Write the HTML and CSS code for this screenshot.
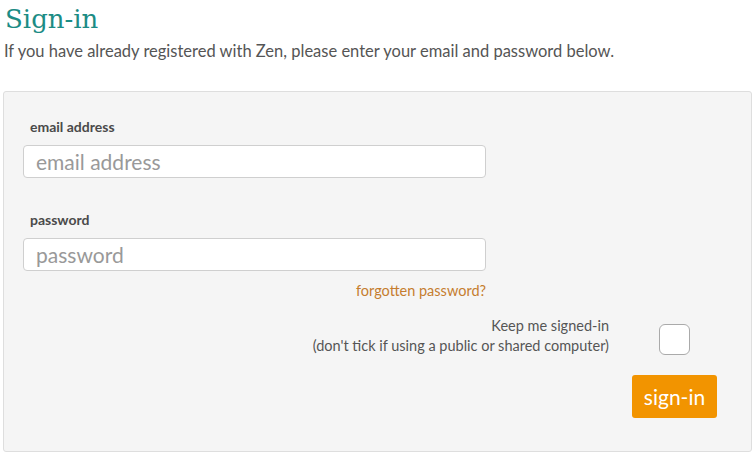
FILE: index.html
```html
<!DOCTYPE html>
<html lang="en">
<head>
<meta charset="utf-8">
<title>Sign-in</title>
<link rel="stylesheet" href="styles.css">
</head>
<body>
<main class="page">
  <h1 class="title">Sign-in</h1>
  <p class="intro">If you have already registered with Zen, please enter your email and password below.</p>
  <form class="panel">
    <div class="field">
      <label class="label" for="email">email address</label>
      <input class="input" id="email" type="text" placeholder="email address">
    </div>
    <div class="field field-pw">
      <label class="label" for="pw">password</label>
      <input class="input" id="pw" type="password" placeholder="password">
      <a class="forgot" href="#">forgotten password?</a>
    </div>
    <div class="keep">
      <div class="keep-text">Keep me signed-in<br>(don't tick if using a public or shared computer)</div>
      <span class="checkbox"></span>
    </div>
    <div class="actions">
      <button class="btn" type="button">sign-in</button>
    </div>
  </form>
</main>
</body>
</html>
```
FILE: styles.css
```css
* { box-sizing: border-box; }
html, body { margin: 0; padding: 0; background: #fff; }
body { font-family: "Lato", "Open Sans", sans-serif; color: #555; }
.page { padding: 0 4px 0 3px; }
.title {
  margin: 0;
  padding: 4px 0 0 2px;
  font-family: "DejaVu Serif", serif;
  font-weight: normal;
  font-size: 26px;
  line-height: 30px;
  color: #1c8c85;
}
.intro {
  margin: 6px 0 0 1px;
  font-size: 16.5px;
  line-height: 22px;
  color: #555;
}
.panel {
  margin-top: 29px;
  background: #f5f5f5;
  border: 1px solid #dedede;
  border-radius: 3px;
  padding: 26px 34px 34px 19px;
  height: 361px;
}
.field { display: flex; flex-direction: column; width: 463px; }
.field-pw { margin-top: 33px; }
.label {
  font-size: 14px;
  font-weight: bold;
  color: #4a4a4a;
  padding-left: 7px;
  line-height: 18px;
  margin-bottom: 9px;
}
.input {
  height: 33px;
  border: 1px solid #cfcfcf;
  border-radius: 4px;
  background: #fff;
  font-family: inherit;
  font-size: 21px;
  padding: 0 12px;
  color: #555;
  outline: none;
}
.input::placeholder { color: #999; }
.forgot {
  align-self: flex-end;
  margin-top: 11px;
  font-size: 14.5px;
  line-height: 18px;
  color: #c57d2f;
  text-decoration: none;
}
.keep {
  display: flex;
  justify-content: flex-end;
  align-items: center;
  margin-top: 16px;
  gap: 50px;
  padding-right: 27px;
}
.keep-text {
  text-align: right;
  font-size: 14.5px;
  line-height: 20px;
  color: #555;
}
.checkbox {
  width: 31px;
  height: 31px;
  margin-top: 7px;
  background: #fff;
  border: 1px solid #aaa;
  border-radius: 6px;
}
.actions { display: flex; justify-content: flex-end; margin-top: 19px; }
.btn {
  width: 85px;
  height: 43px;
  background: #f29400;
  color: #fff;
  border: none;
  border-radius: 3px;
  font-family: inherit;
  font-size: 21px;
  cursor: pointer;
}
```
